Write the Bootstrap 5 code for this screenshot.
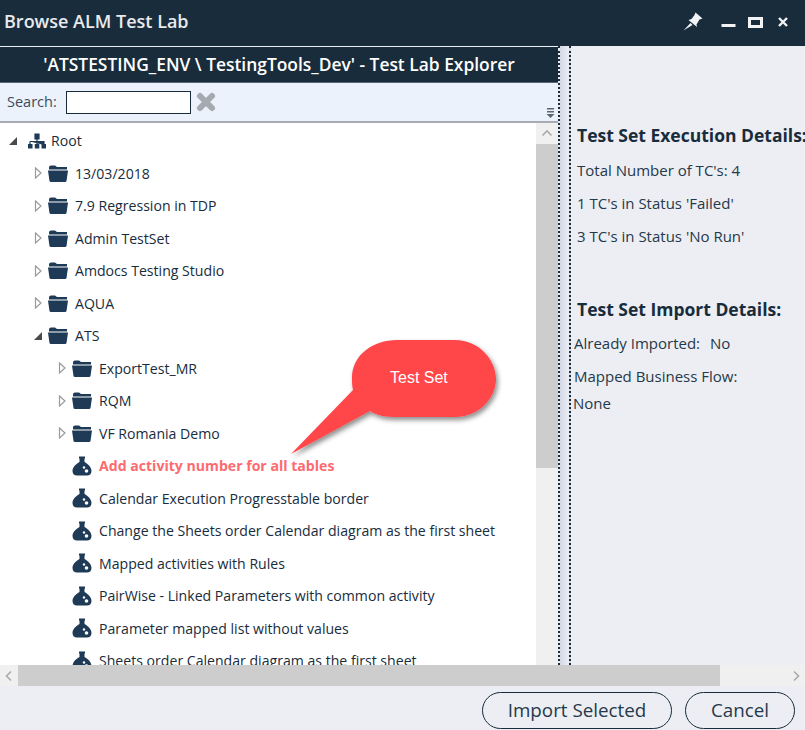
<!DOCTYPE html>
<html lang="en">
<head>
  <meta charset="UTF-8" />
  <meta name="viewport" content="width=device-width, initial-scale=1.0"/>
  <title>Browse ALM Test Lab</title>
  <link href="https://cdn.jsdelivr.net/npm/bootstrap@5.3.6/dist/css/bootstrap.min.css" rel="stylesheet"/>
  <style>
    html, body { height: 730px; overflow: hidden; }
    body { background-color: #edeef3; color: #182c3c; font-family: "Open Sans", "Noto Sans", sans-serif; font-size: 14px; }
    .title-bar { height: 46px; background-color: #182c3c; color: #e8eaed; }
    .title-text { font-size: 18px; font-weight: 600; padding: 0 0 4px 4px; }
    .win-btns { padding: 0 17px 2px 0; }
    .pin-icon { margin-right: 18px; }
    .min-icon { margin-right: 12px; }
    .max-icon { margin-right: 15px; }
    .main-area { height: 619px; }
    .left-pane { width: 558px; position: relative; }
    .explorer-head { height: 36px; margin-top: 1px; background-color: #182c3c; color: #fff; font-size: 17.4px; font-weight: 600; border-bottom: 1px solid #5a6772; }
    .search-bar { height: 40px; background-color: #ebf2fb; border-bottom: 2px solid #a9abb0; padding-left: 7px; position: relative; }
    .search-bar label { font-size: 14.5px; color: #3c4c5a; margin-right: 9px; }
    .search-box { width: 125px; height: 23px; border: 1px solid #182c3c; background: #fff; padding: 0; }
    .collapse-mark { position: absolute; right: 3px; bottom: 3px; }
    .tree-wrap { height: 542px; position: relative; overflow: hidden; background: #fff; }
    .tree-list { width: 536px; height: 542px; overflow: hidden; padding-top: 1.7px; }
    .tree-row { height: 32.5px; font-size: 14.1px; color: #182c3c; white-space: nowrap; }
    .lvl0 { padding-left: 8px; }
    .lvl1 { padding-left: 33px; }
    .lvl2 { padding-left: 57px; }
    .lvl3 { padding-left: 72px; }
    .arrow-box { width: 10px; margin-right: 5px; flex: none; }
    .node-icon { margin-right: 7px; flex: none; }
    .root-icon { margin-left: 4px; margin-right: 4px; }
    .hot-row { color: #fb6b70; font-weight: 700; }
    .v-scroll { position: absolute; top: 0; right: 0; width: 22px; height: 542px; background: #f0f0f0; }
    .v-thumb { height: 324px; margin-top: 21px; background: #cdcdcd; }
    .v-arrow { position: absolute; top: 5px; left: 5px; }
    .splitter { width: 13px; background: linear-gradient(to right, #d3d9e8, #edeef3); border-left: 2px dotted #182c3c; border-right: 2px dotted #182c3c; }
    .detail-pane { flex: 1; position: relative; padding: 79px 0 0 6px; white-space: nowrap; overflow: hidden; }
    .detail-pane h6 { font-size: 17.5px; line-height: 21px; font-weight: 700; color: #182c3c; margin: 0 0 7.5px; }
    .detail-line { font-size: 15px; color: #24394a; height: 33px; line-height: 33px; }
    .detail-pane .import-title { margin-top: 46px; }
    .import-line { margin-left: -3px; }
    .import-val { margin-left: 10px; }
    .none-line { margin-left: -4px; margin-top: -6px; }
    .h-scroll { height: 21px; background: #f0f0f0; position: relative; }
    .h-thumb { position: absolute; left: 18px; top: 0; width: 702px; height: 21px; background: #cdcdcd; }
    .h-arrow { position: absolute; top: 5px; }
    .h-left { left: 4px; }
    .h-right { right: 4px; }
    .foot-bar { height: 44px; padding: 6px 10px 1px 0; gap: 13px; }
    .foot-btn { height: 37px; border: 1.5px solid #182c3c; border-radius: 19px; background: transparent; color: #24394a; font-size: 18.8px; padding: 0; line-height: 1; }
    .btn-import { width: 190px; }
    .btn-cancel { width: 110px; }
    .callout { position: absolute; left: 285px; top: 215px; width: 225px; height: 140px; }
    .callout-text { position: absolute; left: 105px; top: 28px; color: #fff; font-family: "Liberation Sans", sans-serif; font-size: 16px; }
  </style>
</head>

<body>
  <svg width="0" height="0" class="position-absolute">
    <defs>
      <symbol id="folder" viewBox="0 0 20 19">
        <path d="M1 3.5 Q1 1.5 3 1.5 H7 L9 3 H19 V5.5 H1 Z" fill="#1f3a57"/>
        <path d="M0 6.5 H20 L18.5 17 Q18.3 18 17 18 H3 Q1.7 18 1.5 17 Z" fill="#1f3a57"/>
      </symbol>
      <symbol id="flask" viewBox="0 0 20 20">
        <path d="M7 .5 H13 V2.5 H12.5 V6 C16 8 19.5 11 19.5 15 C19.5 18 17.5 19.5 15 19.5 H5 C2.5 19.5 .5 18 .5 15 C.5 11 4 8 7.5 6 V2.5 H7 Z" fill="#1f3a57"/>
        <circle cx="12" cy="11.5" r="1.2" fill="#fff"/><circle cx="14.5" cy="15" r="1.8" fill="#fff"/>
      </symbol>
      <symbol id="tri-open" viewBox="0 0 10 10"><path d="M9 1 V9 H1 Z" fill="#4a4a4a"/></symbol>
      <symbol id="tri-closed" viewBox="0 0 10 12"><path d="M2.5 1 L8 6 L2.5 11 Z" fill="#fff" stroke="#9a9a9a" stroke-width="1.2"/></symbol>
    </defs>
  </svg>

  <div class="title-bar d-flex align-items-center justify-content-between">
    <div class="title-text">Browse ALM Test Lab</div>
    <div class="win-btns d-flex align-items-center">
      <svg class="pin-icon" width="20" height="20" viewBox="0 0 20 20"><path d="M12.5 .5 L19.5 6.5 L16.5 7.5 L13.5 12.5 L14 15 L5.5 8 L8.5 7 L11.5 3 Z M7.5 11 L.5 18.5 L9.5 13 Z" fill="#f2f3f5"/></svg>
      <svg class="min-icon" width="15" height="16" viewBox="0 0 15 16"><rect x="0.5" y="10" width="14" height="3" fill="#f2f3f5"/></svg>
      <svg class="max-icon" width="15" height="11" viewBox="0 0 15 11"><rect x="1.5" y="1.5" width="12" height="8" fill="none" stroke="#f2f3f5" stroke-width="3"/></svg>
      <svg width="10" height="10" viewBox="0 0 10 10"><path d="M1 1 L9 9 M9 1 L1 9" stroke="#f2f3f5" stroke-width="2.4"/></svg>
    </div>
  </div>

  <div class="main-area d-flex">
    <div class="left-pane d-flex flex-column">
      <div class="explorer-head d-flex align-items-center justify-content-center">'ATSTESTING_ENV \ TestingTools_Dev' - Test Lab Explorer</div>
      <div class="search-bar d-flex align-items-center">
        <label for="searchBox" class="mb-0">Search:</label>
        <input id="searchBox" class="search-box" type="text"/>
        <svg class="ms-1" width="22" height="22" viewBox="0 0 22 22"><path d="M5 5 L17 17 M17 5 L5 17" stroke="#a5a9b0" stroke-width="6" stroke-linecap="round"/></svg>
        <svg class="collapse-mark" width="9" height="10" viewBox="0 0 9 10"><path d="M1 0 H8 V1.5 H1 Z M1 3 H8 V4.5 H1 Z M0.5 6 H8.5 L4.5 10 Z" fill="#5a6772"/></svg>
      </div>
      <div class="tree-wrap">
        <div id="tree" class="tree-list"></div>
        <div class="v-scroll">
          <svg class="v-arrow" width="12" height="10" viewBox="0 0 12 10"><path d="M1.5 7.5 L6 3 L10.5 7.5" fill="none" stroke="#aaa" stroke-width="1.6"/></svg>
          <div class="v-thumb"></div>
        </div>
        <div class="callout">
          <svg width="225" height="140" viewBox="0 0 225 140">
            <defs><filter id="shade" x="-10%" y="-10%" width="125%" height="125%"><feDropShadow dx="2" dy="3" stdDeviation="2.5" flood-color="#000" flood-opacity=".45"/></filter></defs>
            <path d="M67 40 C67 17 88 2 112 2 H170 C194 2 211 22 211 41 C211 60 194 79 170 79 H112 C102 79 92 78 85 73 L6 116 L68 52 C67 48 67 44 67 40 Z" fill="#ff4649" filter="url(#shade)"/>
          </svg>
          <div class="callout-text">Test Set</div>
        </div>
      </div>
    </div>
    <div class="splitter"></div>
    <div class="detail-pane">
      <h6>Test Set Execution Details:</h6>
      <div class="detail-line">Total Number of TC's: 4</div>
      <div class="detail-line">1 TC's in Status 'Failed'</div>
      <div class="detail-line">3 TC's in Status 'No Run'</div>
      <h6 class="import-title">Test Set Import Details:</h6>
      <div class="detail-line import-line">Already Imported:<span class="import-val">No</span></div>
      <div class="detail-line import-line">Mapped Business Flow:</div>
      <div class="detail-line none-line">None</div>
    </div>
  </div>

  <div class="h-scroll">
    <svg class="h-arrow h-left" width="10" height="12" viewBox="0 0 10 12"><path d="M7 1.5 L2.5 6 L7 10.5" fill="none" stroke="#aaa" stroke-width="1.6"/></svg>
    <div class="h-thumb"></div>
    <svg class="h-arrow h-right" width="10" height="12" viewBox="0 0 10 12"><path d="M3 1.5 L7.5 6 L3 10.5" fill="none" stroke="#aaa" stroke-width="1.6"/></svg>
  </div>

  <div class="foot-bar d-flex align-items-center justify-content-end">
    <button class="btn foot-btn btn-import" type="button">Import Selected</button>
    <button class="btn foot-btn btn-cancel" type="button">Cancel</button>
  </div>

  <script>
    // level, icon, arrow, label
    const rows = [
      [0, 'root', 'open', 'Root'],
      [1, 'folder', 'closed', '13/03/2018'],
      [1, 'folder', 'closed', '7.9 Regression in TDP'],
      [1, 'folder', 'closed', 'Admin TestSet'],
      [1, 'folder', 'closed', 'Amdocs Testing Studio'],
      [1, 'folder', 'closed', 'AQUA'],
      [1, 'folder', 'open', 'ATS'],
      [2, 'folder', 'closed', 'ExportTest_MR'],
      [2, 'folder', 'closed', 'RQM'],
      [2, 'folder', 'closed', 'VF Romania Demo'],
      [3, 'flask', '', 'Add activity number for all tables'],
      [3, 'flask', '', 'Calendar Execution Progresstable border'],
      [3, 'flask', '', 'Change the Sheets order Calendar diagram as the first sheet'],
      [3, 'flask', '', 'Mapped activities with Rules'],
      [3, 'flask', '', 'PairWise - Linked Parameters with common activity'],
      [3, 'flask', '', 'Parameter mapped list without values'],
      [3, 'flask', '', 'Sheets order Calendar diagram as the first sheet']
    ];

    const rootIcon = `<svg class="node-icon root-icon" width="20" height="18" viewBox="0 0 20 18"><path d="M8 2 H12 V7 H8 Z M3 9.5 H17 V13 M3 13 V9.5 M10 7 V13" fill="#1f3a57" stroke="#1f3a57" stroke-width="1.2"/><rect x="1" y="12" width="4.5" height="4.5" fill="#1f3a57"/><rect x="7.8" y="12" width="4.5" height="4.5" fill="#1f3a57"/><rect x="14.5" y="12" width="4.5" height="4.5" fill="#1f3a57"/></svg>`;

    let html = '';
    rows.forEach((r, i) => {
      const arrow = r[2] === 'open'
        ? '<svg class="arrow-box" width="10" height="10"><use href="#tri-open"/></svg>'
        : r[2] === 'closed' ? '<svg class="arrow-box" width="10" height="12"><use href="#tri-closed"/></svg>' : '';
      const icon = r[1] === 'root' ? rootIcon
        : r[1] === 'folder' ? '<svg class="node-icon" width="20" height="19"><use href="#folder"/></svg>'
        : '<svg class="node-icon" width="20" height="20"><use href="#flask"/></svg>';
      html += `<div class="tree-row d-flex align-items-center lvl${r[0]}${i === 10 ? ' hot-row' : ''}">${arrow}${icon}<span>${r[3]}</span></div>`;
    });
    document.getElementById('tree').innerHTML = html;
  </script>
  <script src="https://cdn.jsdelivr.net/npm/bootstrap@5.3.6/dist/js/bootstrap.bundle.min.js"></script>
</body>
</html>
